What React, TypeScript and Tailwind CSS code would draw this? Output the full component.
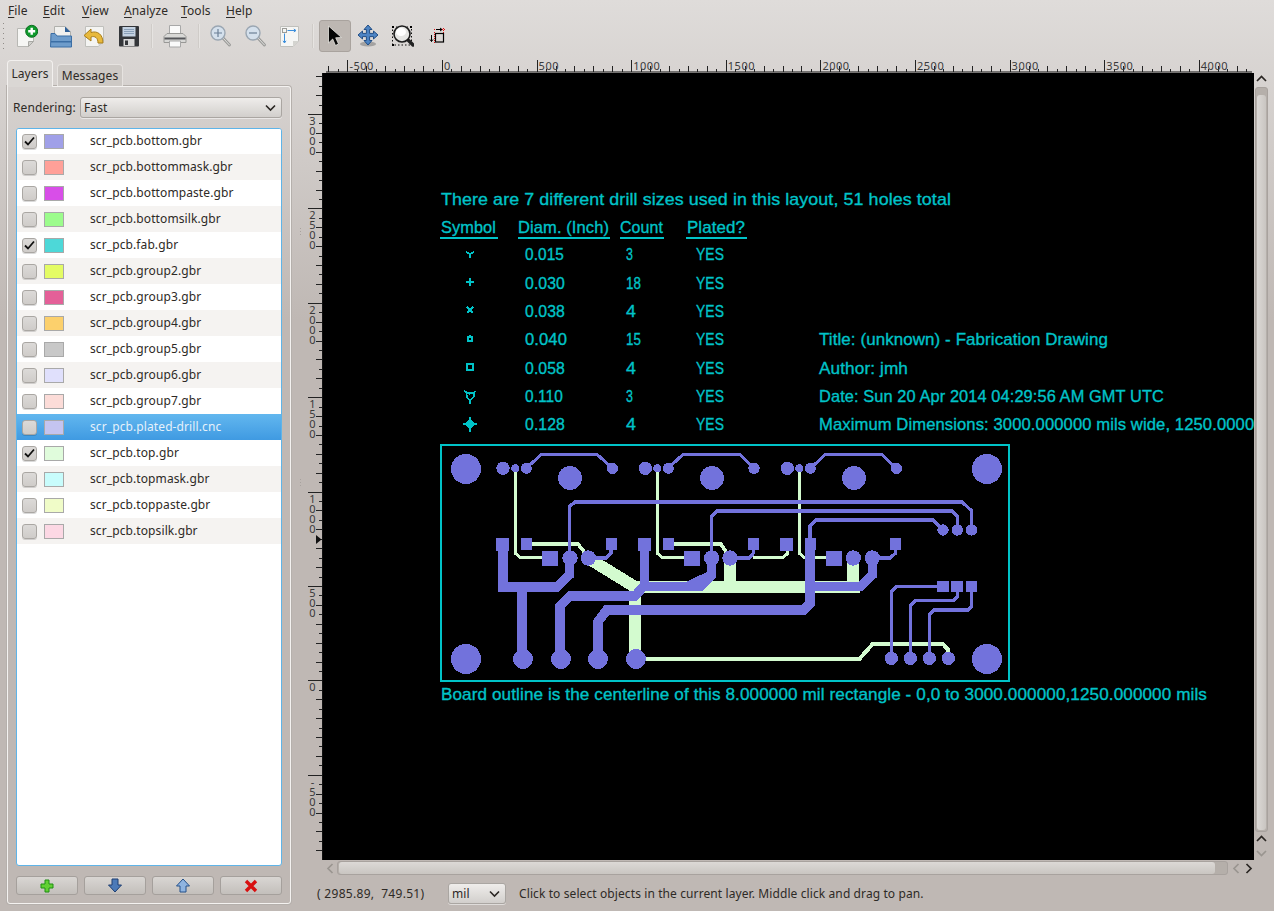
import React from "react";

const CY = "#00c3c8";
const PU = "#7272dc";
const GR = "#d3fbcf";

const layers: [string, string, boolean][] = [
  ["scr_pcb.bottom.gbr", "#a0a0e8", true],
  ["scr_pcb.bottommask.gbr", "#ffa098", false],
  ["scr_pcb.bottompaste.gbr", "#d84ee8", false],
  ["scr_pcb.bottomsilk.gbr", "#9cfc8c", false],
  ["scr_pcb.fab.gbr", "#4dd8d8", true],
  ["scr_pcb.group2.gbr", "#e4fc64", false],
  ["scr_pcb.group3.gbr", "#e46098", false],
  ["scr_pcb.group4.gbr", "#fcd06c", false],
  ["scr_pcb.group5.gbr", "#c8c8c8", false],
  ["scr_pcb.group6.gbr", "#e0e0fc", false],
  ["scr_pcb.group7.gbr", "#fcdcd8", false],
  ["scr_pcb.plated-drill.cnc", "#c4c4f0", false],
  ["scr_pcb.top.gbr", "#e0fcdc", true],
  ["scr_pcb.topmask.gbr", "#c8fcfc", false],
  ["scr_pcb.toppaste.gbr", "#f0fcc8", false],
  ["scr_pcb.topsilk.gbr", "#fcd8e4", false],
];

const Ico = ({ children }: { children: React.ReactNode }) => (
  <svg width="24" height="24" viewBox="0 0 24 24" className="block">
    {children}
  </svg>
);

const IconNew = () => (
  <Ico>
    <path d="M3.5 4.5H19.5V17.5L14.5 22.5H3.5Z" fill="#f6f6f4" stroke="#b8b8b4" />
    <path d="M14.5 22.5V17.5H19.5Z" fill="#d0d0cc" stroke="#a8a8a4" />
    <circle cx="17.7" cy="7.3" r="6" fill="#0f9a2c" stroke="#0a6e1e" />
    <path d="M17.7 3.8V10.8M14.2 7.3H21.2" stroke="#fff" strokeWidth="2.4" />
  </Ico>
);
const IconOpen = () => (
  <Ico>
    <path d="M6.5 2.5H17L22.5 8V14H6.5Z" fill="#f0f0ee" stroke="#b0b0ac" />
    <path d="M17 2.5V8H22.5Z" fill="#2f5f96" />
    <path d="M3 9.5H7L9 12H23.5V23H2.5Z" fill="#6e9ccb" stroke="#3b6ea5" />
    <rect x="3" y="17" width="20" height="1.5" fill="#3b6ea5" />
  </Ico>
);
const IconRevert = () => (
  <Ico>
    <path d="M3.5 2.5H21.5V17.5L16.5 22.5H3.5Z" fill="#f4f4f2" stroke="#c0c0bc" />
    <path d="M16.5 22.5V17.5H21.5Z" fill="#d4d4d0" />
    <path d="M21 19C21 10 15 6.5 9 8.5V5L2 11.5L9 17V13C13 11.5 16 14 16 19Z" fill="#e8b93c" stroke="#a87c18" />
  </Ico>
);
const IconSave = () => (
  <Ico>
    <rect x="3" y="2" width="20" height="20.5" rx="1" fill="#34363a" />
    <rect x="6.5" y="3" width="13" height="9.5" fill="#c4d2e2" />
    <path d="M8 5.5H18M8 7.5H18M8 9.5H18" stroke="#8aa0b8" />
    <rect x="7.5" y="15" width="11" height="7" fill="#d8d8d8" />
    <rect x="9" y="16.5" width="3" height="4.5" fill="#34363a" />
  </Ico>
);
const IconPrint = () => (
  <Ico>
    <path d="M6.5 1.5H17.5V9.5H6.5Z" fill="#fafafa" stroke="#a8a8a8" />
    <path d="M4 9.5H20L23 12.5V18.5H1V12.5Z" fill="#d8d8d6" stroke="#989896" />
    <rect x="1.5" y="13.5" width="21" height="2" fill="#55565a" />
    <path d="M6.5 17H17.5V23H6.5Z" fill="#fafafa" stroke="#a8a8a8" />
  </Ico>
);
const Mag = ({ cx, minus }: { cx: number; minus?: boolean }) => (
  <Ico>
    <path d={`M${cx + 5} 14L${cx + 11.5} 21`} stroke="#9a9a98" strokeWidth="3" strokeLinecap="round" />
    <path d={`M${cx + 5} 14L${cx + 11.5} 21`} stroke="#e4e4e2" strokeWidth="1" strokeLinecap="round" />
    <circle cx={cx} cy="9" r="7" fill="#d4e0ec" stroke="#9aa6b2" strokeWidth="1.4" />
    <path d={minus ? `M${cx - 4} 9H${cx + 4}` : `M${cx - 4} 9H${cx + 4}M${cx} 5V13`} stroke="#6a7f96" strokeWidth="1.2" />
  </Ico>
);
const IconFit = () => (
  <Ico>
    <path d="M2.5 2.5H20.5V17L15 22.5H2.5Z" fill="#f6f6f4" stroke="#c0c0bc" />
    <path d="M15 22.5V17H20.5Z" fill="#d4d4d0" />
    <rect x="4.5" y="4.5" width="4" height="4" fill="#f6f6f4" stroke="#9c9c98" />
    <path d="M9.5 6.5H18M18 6.5L15.8 5M18 6.5L15.8 8M6.5 9.5V19M6.5 19L5 16.8M6.5 19L8 16.8" stroke="#3d8fdc" strokeWidth="1" fill="none" />
  </Ico>
);
const IconPointer = () => (
  <Ico>
    <path d="M5.5 2L5.5 19L9.7 15L12.5 21.5L15.5 20L12.7 13.8L18.5 13.5Z" fill="#050505" stroke="#e6e4e0" strokeWidth="0.8" />
  </Ico>
);
const IconMove = () => (
  <Ico>
    <ellipse cx="12" cy="20" rx="8" ry="2.5" fill="#777" opacity="0.55" />
    <path d="M12 1L16 5.5H13.6V9.4H17.5V7L22 11L17.5 15V12.6H13.6V16.5H16L12 21L8 16.5H10.4V12.6H6.5V15L2 11L6.5 7V9.4H10.4V5.5H8Z" fill="#4d84c4" stroke="#234f86" />
  </Ico>
);
const IconZoomRegion = () => (
  <Ico>
    <rect x="2.5" y="3" width="19" height="18" fill="none" stroke="#111" strokeWidth="1" strokeDasharray="1.5 2" />
    <path d="M2 3h2M20 3h2M2 21h2" stroke="#000" strokeWidth="2" />
    <path d="M17 15L23 21" stroke="#222" strokeWidth="3.4" strokeLinecap="round" />
    <circle cx="12" cy="10" r="8" fill="#e6e6e4" stroke="#1c1c1c" strokeWidth="1.6" />
    <ellipse cx="11" cy="8" rx="5" ry="4" fill="#fff" />
  </Ico>
);
const IconMeasure = () => (
  <Ico>
    <path d="M10 5.5H21M10.5 8V19M19.5 4V9" stroke="#e01010" strokeWidth="1" strokeDasharray="1 1" fill="none" />
    <rect x="11.5" y="9.5" width="8" height="8.5" fill="none" stroke="#000" strokeWidth="1.2" />
    <path d="M12 5.5H18M18 5.5L16 4M18 5.5L16 7M7.5 11V17.5M7.5 17.5L6 15.5M7.5 17.5L9 15.5" stroke="#000" strokeWidth="1" fill="none" />
  </Ico>
);

const TB = ({ children, active }: { children: React.ReactNode; active?: boolean }) => (
  <div
    className={
      active
        ? "flex h-[32px] w-[32px] items-center justify-center rounded-[3px] border border-[#a9a39e] bg-[#bdb7b2]"
        : "flex h-[32px] w-[34px] items-center justify-center"
    }
  >
    {children}
  </div>
);

const Sep = ({ w }: { w: string }) => (
  <div className={`flex h-[32px] items-center justify-center ${w}`}>
    <div className="h-[24px] w-[2px] bg-gradient-to-r from-[#c4c0bc] to-[#f2f0ee]" />
  </div>
);

const Chevron = ({ dir, color = "#2a2623" }: { dir: "up" | "down" | "left" | "right"; color?: string }) => {
  const d = {
    up: "M1 7L5.5 2.5L10 7",
    down: "M1 3L5.5 7.5L10 3",
    left: "M7.5 1L3 5.5L7.5 10",
    right: "M3.5 1L8 5.5L3.5 10",
  }[dir];
  return (
    <svg width="11" height="11" viewBox="0 0 11 11" className="block">
      <path d={d} fill="none" stroke={color} strokeWidth="1.7" />
    </svg>
  );
};

const Combo = ({ label, cls }: { label: string; cls: string }) => (
  <div
    className={`flex h-[21px] items-center justify-between rounded-[3px] border border-[#aaa6a2] bg-gradient-to-b from-[#efedeb] to-[#d2cfcc] pl-[3px] pr-[5px] shadow-[0_1px_0_#ffffff80] ${cls}`}
  >
    <span>{label}</span>
    <svg width="11" height="8" viewBox="0 0 11 8" className="block">
      <path d="M1 1.5L5.5 6L10 1.5" fill="none" stroke="#2a2623" strokeWidth="1.6" />
    </svg>
  </div>
);

const BottomBtn = ({ children }: { children: React.ReactNode }) => (
  <div className="flex h-[19px] w-[62px] items-center justify-center rounded-[3px] border border-[#a5a09c] bg-gradient-to-b from-[#d9d6d3] to-[#c3bfbb]">
    {children}
  </div>
);

const Menu = ({ u, rest, w }: { u: string; rest: string; w: string }) => (
  <div className={w}>
    <span className="underline underline-offset-2">{u}</span>
    {rest}
  </div>
);

const HRuler = () => {
  const step = 94.6 / 10;
  const ticks: number[] = [];
  for (let i = -12; i < 90; i++) ticks.push(i);
  const labels = [-500, 0, 500, 1000, 1500, 2000, 2500, 3000, 3500, 4000];
  return (
    <svg width="931" height="15" viewBox="323 58 931 15" className="block">
      <rect x="326" y="71.5" width="926" height="1" fill="#111" />
      {ticks.map((i) => {
        const x = Math.round(442 + i * step) + 0.5;
        if (x < 326 || x > 1252) return null;
        const h = i % 10 === 0 ? 12 : i % 2 === 0 ? 6 : 3;
        return <rect key={i} x={x - 0.5} y={72 - h} width="1" height={h} fill="#222" />;
      })}
      {labels.map((l) => (
        <text
          key={l}
          x={442 + (l / 500) * 94.6 + 2}
          y="70"
          className="fill-[#3a3a3a] font-['Noto_Sans',sans-serif] text-[11px] tracking-[0.5px]"
        >
          {l}
        </text>
      ))}
    </svg>
  );
};

const VRuler = () => {
  const step = 9.44;
  const ticks: number[] = [];
  for (let i = -5; i < 80; i++) ticks.push(i);
  const labels = [3000, 2500, 2000, 1500, 1000, 500, 0, -500];
  return (
    <svg width="32" height="787" viewBox="291 73 32 787" className="block">
      <rect x="322" y="73" width="1" height="787" fill="#111" />
      {ticks.map((i) => {
        const y = Math.round(114 + i * step);
        if (y < 75 || y > 859) return null;
        const h = i % 10 === 0 ? 14 : i % 2 === 0 ? 6 : 3;
        return <rect key={i} x={322 - h} y={y} width={h} height="1" fill="#222" />;
      })}
      {labels.map((l, k) => (
        <text key={l} y={114 + k * 94.4 + 11} textAnchor="middle" className="fill-[#3a3a3a] font-['Noto_Sans',sans-serif] text-[11px]">
          {String(l)
            .split("")
            .map((c, j) => (
              <tspan key={j} x="312.5" dy={j === 0 ? 0 : 10}>
                {c}
              </tspan>
            ))}
        </text>
      ))}
      <path d="M316 535L321.5 539.5L316 544Z" fill="#111" />
      <g fill="#a8a29e">
        <rect x="300" y="228" width="1" height="1" />
        <rect x="300" y="231" width="1" height="1" />
        <rect x="300" y="234" width="1" height="1" />
        <rect x="300" y="479" width="1" height="1" />
        <rect x="300" y="482" width="1" height="1" />
        <rect x="300" y="485" width="1" height="1" />
      </g>
    </svg>
  );
};

const T = ({ x, y, w, children }: { x: number; y: number; w: number; children: string }) => (
  <text
    x={x}
    y={y}
    textLength={w}
    lengthAdjust="spacingAndGlyphs"
    fill={CY}
    stroke={CY}
    strokeWidth="0.35"
    className="font-['Liberation_Sans',sans-serif] text-[17px]"
  >
    {children}
  </text>
);

const rows: [string, number, string, number][] = [
  ["0.015", 39, "3", 7],
  ["0.030", 40, "18", 15],
  ["0.038", 40, "4", 10],
  ["0.040", 42, "15", 15],
  ["0.058", 40, "4", 10],
  ["0.110", 38, "3", 7],
  ["0.128", 40, "4", 10],
];
const rowY = [260, 288.5, 316.8, 345, 373.5, 402, 430];

const L = ({ d, w, c = PU }: { d: string; w: number; c?: string }) => (
  <path d={d} fill="none" stroke={c} strokeWidth={w} strokeLinejoin="miter" />
);
const C = ({ x, y, r, c = PU }: { x: number; y: number; r: number; c?: string }) => (
  <circle cx={x} cy={y} r={r} fill={c} />
);
const S = ({ x1, y1, x2, y2, c = PU }: { x1: number; y1: number; x2: number; y2: number; c?: string }) => (
  <rect x={x1} y={y1} width={x2 - x1} height={y2 - y1} fill={c} />
);

const Canvas = () => (
  <svg width="931" height="787" viewBox="323 73 931 787" className="block bg-black">
    <T x={441} y={205} w={510}>There are 7 different drill sizes used in this layout, 51 holes total</T>
    <T x={441} y={233} w={55}>Symbol</T>
    <T x={518} y={233} w={91}>Diam. (Inch)</T>
    <T x={620} y={233} w={43}>Count</T>
    <T x={687} y={233} w={58}>Plated?</T>
    <g fill={CY}>
      <rect x="440" y="237" width="58" height="2" />
      <rect x="518" y="237" width="92" height="2" />
      <rect x="620" y="237" width="44" height="2" />
      <rect x="686" y="237" width="61" height="2" />
    </g>
    {rows.map((r, i) => (
      <g key={i}>
        <T x={525} y={rowY[i]} w={r[1]}>{r[0]}</T>
        <T x={626} y={rowY[i]} w={r[3]}>{r[2]}</T>
        <T x={696} y={rowY[i]} w={28}>YES</T>
      </g>
    ))}
    <g fill="none" stroke={CY} strokeWidth="1.6" shapeRendering="crispEdges">
      <path d="M466 252L470 254L474 252M470 254V258" />
      <path d="M466 282H474M470 278V286" />
      <path d="M467 307L473 313M473 307L467 313" />
      <path d="M468 337H472V341H468ZM470 335V337" />
      <rect x="467" y="364" width="6" height="6" />
      <path d="M464 391L470 394M466.5 393H474V396L470 401L467 397ZM470 401V404M474 393L475 391" />
      <circle cx="470" cy="424" r="3.5" fill={CY} />
      <path d="M470 417V432M463 424H477" />
    </g>
    <T x={819} y={345} w={289}>Title: (unknown) - Fabrication Drawing</T>
    <T x={819} y={373.5} w={89}>Author: jmh</T>
    <T x={819} y={402} w={345}>Date: Sun 20 Apr 2014 04:29:56 AM GMT UTC</T>
    <T x={819} y={430} w={525}>Maximum Dimensions: 3000.000000 mils wide, 1250.000000 mils high</T>
    <T x={441} y={700} w={766}>Board outline is the centerline of this 8.000000 mil rectangle - 0,0 to 3000.000000,1250.000000 mils</T>

    <rect x="441" y="445" width="568" height="236" fill="none" stroke={CY} strokeWidth="2" shapeRendering="crispEdges" />

    <g shapeRendering="crispEdges">
      <L c={GR} w={3.3} d="M515.3 468V553L520 557.5H549" />
      <L c={GR} w={3.3} d="M657.3 468V553L662 557.5H691" />
      <L c={GR} w={3.3} d="M799.3 468V553L804 557.5H834" />
      <L c={GR} w={3.6} d="M526 544H578L585 553L588 558" />
      <L c={GR} w={3.6} d="M668 544H721L727 553L730 558" />
      <L c={GR} w={3.4} d="M753 557.5H783L787.7 553V545" />
      <L c={GR} w={12} d="M588 558L635 587V659" />
      <L c={GR} w={4} d="M635 659H859.3L872.7 644H943L948.3 650V658" />
      <S c={GR} x1={630} y1={581} x2={860} y2={593} />
      <S c={GR} x1={724} y1={558} x2={736} y2={590} />
      <S c={GR} x1={847} y1={558} x2={859} y2={590} />
    </g>
    <g shapeRendering="crispEdges">
      <C x={466} y={469} r={15} />
      <C x={466} y={659} r={15} />
      <C x={987} y={469} r={15} />
      <C x={987} y={659} r={15} />
      <C x={570} y={478} r={12} />
      <C x={712} y={478} r={12} />
      <C x={854} y={478} r={12} />

      <L w={3} d="M526.3 468.3L541.7 454H596.7L612.3 468.3" />
      <L w={3} d="M668.3 468.3L683.3 454H739.3L754 468.3" />
      <L w={3} d="M810.3 468.3L826 454H881.3L896.3 468.3" />
      {[503, 645.3, 787.3].map((x) => <C key={x} x={x} y={468.3} r={6.7} />)}
      {[515.3, 657.3, 799.3].map((x) => <C key={x} x={x} y={468.3} r={4} />)}
      {[526.3, 668.3, 810.3].map((x) => <C key={x} x={x} y={468.3} r={5.5} />)}
      {[612.3, 754, 896.3].map((x) => <C key={x} x={x} y={468.3} r={5.7} />)}

      <L w={9.5} d="M503 544V587H556.7L569.3 575V558" />
      <L w={9.5} d="M522 587V659" />
      <L w={9.5} d="M644.5 544V586.7H686.7L711.7 575" />
      <L w={9.5} d="M686.7 586.7H700L711.7 575V558" />
      <L w={9.5} d="M643.3 586.7L635 596H570L560 606V659" />
      <L w={9.5} d="M598 659V621.7L606.7 610H803.3L810 603.3V544" />
      <L w={9.5} d="M810 586.7H860L872.3 575V558" />

      <L w={3.4} d="M569.3 558V506.7L575 502H962.3L971.7 511V530" />
      <L w={3.4} d="M711.3 558V516.7L717.3 511H952.3L957.3 516V530" />
      <L w={3.4} d="M810 540V526L816 520H933.3L943.3 530" />
      {[943, 957.3, 971.5].map((x) => <C key={x} x={x} y={530} r={5.7} />)}

      <L w={3.4} d="M587 558H606L611 553V545" />
      <L w={3.4} d="M730 558H749L753.5 553V545" />
      <L w={3.4} d="M872 558H890L895.7 553V545" />

      <S x1={496} y1={538} x2={509} y2={551} />
      <S x1={521} y1={538} x2={532} y2={550} />
      <S x1={542} y1={551} x2={558} y2={566} />
      <S x1={606} y1={538} x2={617} y2={550} />
      <S x1={638} y1={538} x2={651} y2={551} />
      <S x1={663} y1={538} x2={674} y2={550} />
      <S x1={684} y1={551} x2={700} y2={566} />
      <S x1={748} y1={538} x2={759} y2={550} />
      <S x1={780} y1={538} x2={793} y2={551} />
      <S x1={805} y1={538} x2={816} y2={550} />
      <S x1={826} y1={551} x2={842} y2={566} />
      <S x1={890} y1={538} x2={901} y2={550} />
      {[570, 588.3, 711.7, 730, 853.3, 872.3].map((x) => <C key={x} x={x} y={558} r={7.7} />)}

      <L w={3.4} d="M891.3 658V591.7L896.7 586.7H943" />
      <L w={3.4} d="M910.3 658V605.7L915.7 600.7H953.3L957.3 596.7V587" />
      <L w={3.4} d="M929.3 658V615L934.3 610H968.3L971.3 606.7V587" />
      <S x1={937} y1={581} x2={949} y2={592} />
      <S x1={951} y1={581} x2={963} y2={592} />
      <S x1={966} y1={581} x2={977} y2={592} />
      {[891.3, 910.3, 929.3, 948.3].map((x) => <C key={x} x={x} y={658.3} r={6.7} />)}
      {[523, 561, 598, 636].map((x) => <C key={x} x={x} y={659} r={10} />)}
    </g>
  </svg>
);

export default function App() {
  return (
    <div className="flex h-[911px] w-[1274px] flex-col overflow-hidden bg-[linear-gradient(180deg,#dfdcda_0px,#bfb8b4_320px)] font-['Noto_Sans',sans-serif] text-[12px] leading-none tracking-[0.1px] text-[#2e2a26]">
      {/* menu */}
      <div className="flex h-[20px] items-center pl-[8px] pt-[1px]">
        <Menu u="F" rest="ile" w="w-[35px]" />
        <Menu u="E" rest="dit" w="w-[39px]" />
        <Menu u="V" rest="iew" w="w-[42px]" />
        <Menu u="A" rest="nalyze" w="w-[57px]" />
        <Menu u="T" rest="ools" w="w-[45px]" />
        <Menu u="H" rest="elp" w="w-[30px]" />
      </div>
      {/* toolbar */}
      <div className="flex h-[32px] items-center pl-[3px]">
        <div className="mr-[3px] flex h-[28px] w-[3px] flex-col justify-between py-[1px]">
          {[0, 1, 2, 3, 4, 5].map((i) => (
            <div key={i} className="h-[1px] w-[1px] bg-[#8f8b87]" />
          ))}
        </div>
        <TB><IconNew /></TB>
        <TB><IconOpen /></TB>
        <TB><IconRevert /></TB>
        <TB><IconSave /></TB>
        <Sep w="w-[13px]" />
        <TB><IconPrint /></TB>
        <Sep w="w-[13px]" />
        <TB><Mag cx={8} /></TB>
        <TB><Mag cx={9} minus /></TB>
        <TB><IconFit /></TB>
        <Sep w="w-[12px]" />
        <TB active><IconPointer /></TB>
        <TB><IconMove /></TB>
        <TB><IconZoomRegion /></TB>
        <TB><IconMeasure /></TB>
      </div>
      {/* main */}
      <div className="flex min-h-0 flex-1 pb-[7px]">
        {/* left pane */}
        <div className="ml-[7px] flex w-[284px] flex-col pt-[8px]">
          <div className="relative z-10 flex h-[26px] items-end">
            <div className="relative flex h-[27px] w-[46px] translate-y-[1px] items-center justify-center rounded-t-[4px] border border-b-0 border-[#f2f0ee] bg-[#dad7d4]">
              Layers
            </div>
            <div className="ml-[4px] flex h-[22px] w-[66px] items-center justify-center rounded-t-[4px] border border-b-0 border-[#e6e3e0] bg-[#cdc9c5]">
              Messages
            </div>
          </div>
          <div className="flex min-h-0 flex-1 flex-col rounded-b-[3px] rounded-tr-[3px] border border-[#f4f2f0] px-[8px] pb-[8px] pt-[10px] shadow-[0_0_0_1px_#b5b0ac]">
            <div className="flex h-[21px] items-center">
              <span className="-ml-[3px] w-[67px] shrink-0">Rendering:</span>
              <Combo label="Fast" cls="w-[202px] shrink-0" />
            </div>
            <div className="mt-[10px] flex min-h-0 flex-1 flex-col overflow-hidden rounded-[3px] border-[1.5px] border-[#5fb4e8] bg-white">
              <div className="-mt-[1px] flex flex-col">
                {layers.map(([name, col, on], i) => {
                  const sel = i === 11;
                  return (
                    <div
                      key={name}
                      className={`flex h-[26px] items-center pl-[5px] ${
                        sel
                          ? "bg-gradient-to-b from-[#62b7ef] to-[#3f9ae2] text-[#e6f1fa]"
                          : i % 2 === 0
                          ? "bg-white"
                          : "bg-[#f5f3f1]"
                      }`}
                    >
                      <div className="flex h-[15px] w-[15px] items-center justify-center rounded-[3px] border border-[#aaa7a3] bg-gradient-to-b from-[#dcdad8] to-[#cfccc9] shadow-[0_1px_0_#00000026]">
                        {on && (
                          <svg width="11" height="10" viewBox="0 0 11 10" className="block">
                            <path d="M1 5.5L4 8.5L10 1.5" fill="none" stroke="#111" strokeWidth="1.8" />
                          </svg>
                        )}
                      </div>
                      <div className="ml-[7px] h-[15px] w-[20px] border border-[#a9a9a9]" style={{ backgroundColor: col }} />
                      <div className="ml-[26px]">{name}</div>
                    </div>
                  );
                })}
              </div>
            </div>
            <div className="mt-[10px] flex justify-between">
              <BottomBtn>
                <svg width="14" height="14" viewBox="0 0 14 14" className="block">
                  <path d="M5 1H9V5H13V9H9V13H5V9H1V5H5Z" fill="#62d034" stroke="#1f8f12" />
                </svg>
              </BottomBtn>
              <BottomBtn>
                <svg width="14" height="15" viewBox="0 0 14 15" className="block">
                  <path d="M4 1H10V7H13.5L7 14L0.5 7H4Z" fill="#4c7ab8" stroke="#1f3f72" />
                </svg>
              </BottomBtn>
              <BottomBtn>
                <svg width="14" height="15" viewBox="0 0 14 15" className="block">
                  <path d="M4 14H10V8H13.5L7 1L0.5 8H4Z" fill="#8fb4e0" stroke="#24508a" />
                </svg>
              </BottomBtn>
              <BottomBtn>
                <svg width="14" height="14" viewBox="0 0 14 14" className="block">
                  <path d="M2 2L12 12M12 2L2 12" stroke="#d81010" strokeWidth="3.4" />
                </svg>
              </BottomBtn>
            </div>
          </div>
        </div>
        {/* right pane */}
        <div className="flex min-w-0 flex-1 flex-col pt-[6px]">
          <div className="flex h-[15px]">
            <div className="w-[32px]" />
            <HRuler />
          </div>
          <div className="flex h-[787px]">
            <VRuler />
            <Canvas />
            <div className="flex w-[20px] flex-col items-start pl-[1px]">
              <div className="flex h-[14px] w-[13px] items-center justify-center">
                <Chevron dir="up" />
              </div>
              <div className="flex h-[748px] w-[13px] flex-col justify-end rounded-[3px] border border-[#a8a29e] bg-[#b5afaa] px-[1px] pb-[1px]">
                <div className="h-[735px] rounded-[3px] bg-gradient-to-r from-[#dcd9d6] to-[#c9c5c1]" />
              </div>
              <div className="mt-[1px] flex h-[13px] w-[13px] items-center justify-center">
                <Chevron dir="up" />
              </div>
              <div className="flex h-[14px] w-[13px] items-center justify-center">
                <Chevron dir="down" color="#9a9590" />
              </div>
            </div>
          </div>
          <div className="flex h-[16px] items-center pl-[32px]">
            <div className="flex w-[14px] justify-center">
              <Chevron dir="left" color="#9a9590" />
            </div>
            <div className="flex h-[14px] w-[891px] items-center rounded-[3px] border border-[#a8a29e] bg-[#b5afaa] px-[1px]">
              <div className="h-[12px] w-[876px] rounded-[3px] bg-gradient-to-b from-[#dcd9d6] to-[#c9c5c1]" />
            </div>
            <div className="ml-[2px] flex w-[12px] justify-center">
              <Chevron dir="left" color="#9a9590" />
            </div>
            <div className="flex w-[12px] justify-center">
              <Chevron dir="right" />
            </div>
          </div>
          <div className="mt-[7px] flex h-[21px] items-center">
            <div className="ml-[26px] w-[131px] whitespace-pre tracking-[0.3px]">( 2985.89,  749.51)</div>
            <Combo label="mil" cls="w-[58px]" />
            <div className="ml-[13px] whitespace-pre">Click to select objects in the current layer. Middle click and drag to pan.</div>
          </div>
        </div>
      </div>
    </div>
  );
}
